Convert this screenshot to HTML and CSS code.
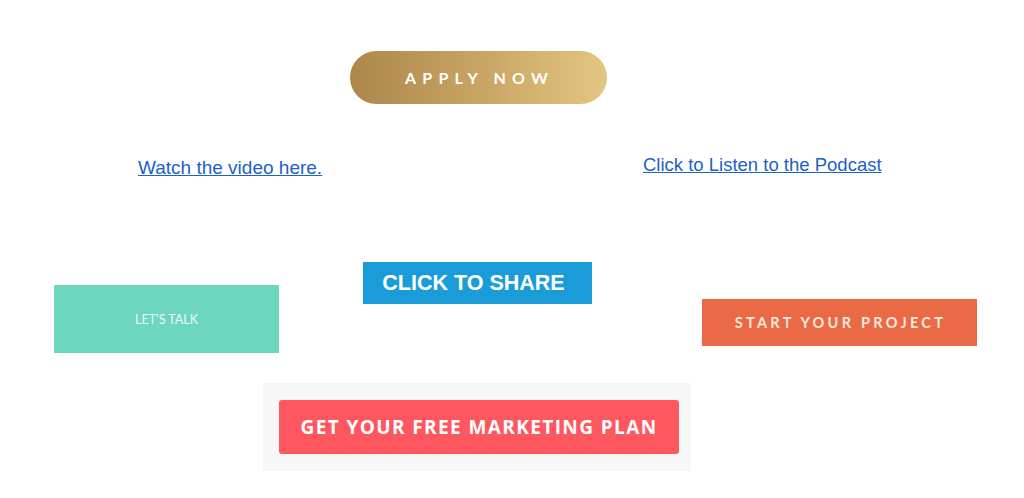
FILE: index.html
```html
<!DOCTYPE html>
<html>
<head>
<meta charset="utf-8">
<link rel="stylesheet" href="styles.css">
</head>
<body>
<div class="page">
  <div class="row row-apply">
    <a class="btn-apply">APPLY NOW</a>
  </div>
  <div class="row-links">
    <a class="link link-video" href="#">Watch the video here.</a>
    <a class="link link-podcast" href="#">Click to Listen to the Podcast</a>
  </div>
  <div class="row row-buttons">
    <a class="btn-talk">LET'S TALK</a>
    <a class="btn-share">CLICK TO SHARE</a>
    <a class="btn-project">START YOUR PROJECT</a>
  </div>
  <div class="row row-plan">
    <div class="plan-box">
      <a class="btn-plan">GET YOUR FREE MARKETING PLAN</a>
    </div>
  </div>
</div>
</body>
</html>
```
FILE: styles.css
```css
html, body {
  margin: 0;
  padding: 0;
  background: #ffffff;
}
.page {
  width: 1024px;
  height: 498px;
  overflow: hidden;
  font-family: "Liberation Sans", Arial, sans-serif;
}
.row {
  display: flex;
}
a { text-decoration: none; }

.row-apply {
  padding: 51px 0 0 350px;
}
.btn-apply {
  width: 257px;
  height: 53px;
  border-radius: 27px;
  background: linear-gradient(90deg, #ad864b 0%, #c9a464 50%, #e2c680 100%);
  color: #ffffff;
  font-family: "Lato", sans-serif;
  font-weight: 700;
  font-size: 16px;
  letter-spacing: 6.2px;
  display: flex;
  align-items: center;
  justify-content: center;
  padding-left: 2px;
  box-sizing: border-box;
}

.row-links {
  display: grid;
  grid-template-columns: 505px auto;
  align-items: start;
  padding-left: 138px;
  margin-top: 51px;
}
.link {
  justify-self: start;
  color: #1c61c6;
  text-decoration: underline;
  line-height: 21px;
}
.link-video {
  font-size: 19px;
  margin-top: 2px;
}
.link-podcast {
  font-size: 18.5px;
  margin-top: -1px;
}

.row-buttons {
  margin-top: 84px;
  align-items: flex-start;
}
.btn-talk {
  margin-left: 54px;
  margin-top: 23px;
  width: 225px;
  height: 68px;
  background: #6dd6be;
  color: #ecf8f6;
  font-family: "Lato", sans-serif;
  font-weight: 400;
  font-size: 12.5px;
  display: flex;
  align-items: center;
  justify-content: center;
}
.btn-share {
  margin-left: 84px;
  width: 229px;
  height: 42px;
  background: #1a9cd8;
  color: #ffffff;
  font-weight: 700;
  font-size: 21.5px;
  display: flex;
  align-items: center;
  justify-content: center;
  padding-right: 8px;
  box-sizing: border-box;
}
.btn-project {
  margin-left: 110px;
  margin-top: 37px;
  width: 275px;
  height: 47px;
  background: #e96a44;
  color: #fbe6de;
  font-family: "Lato", sans-serif;
  font-weight: 700;
  font-size: 14.5px;
  letter-spacing: 3.3px;
  display: flex;
  align-items: center;
  justify-content: center;
  padding-left: 2px;
  box-sizing: border-box;
}

.row-plan {
  margin-top: 30px;
  padding-left: 263px;
}
.plan-box {
  width: 428px;
  height: 88px;
  background: #f7f7f7;
  padding: 17px 0 0 16px;
  box-sizing: border-box;
}
.btn-plan {
  width: 400px;
  height: 54px;
  border-radius: 3px;
  background: #fe5760;
  color: #ffffff;
  font-family: "Open Sans", sans-serif;
  font-weight: 700;
  font-size: 19px;
  letter-spacing: 1.4px;
  display: flex;
  align-items: center;
  justify-content: center;
}
```
